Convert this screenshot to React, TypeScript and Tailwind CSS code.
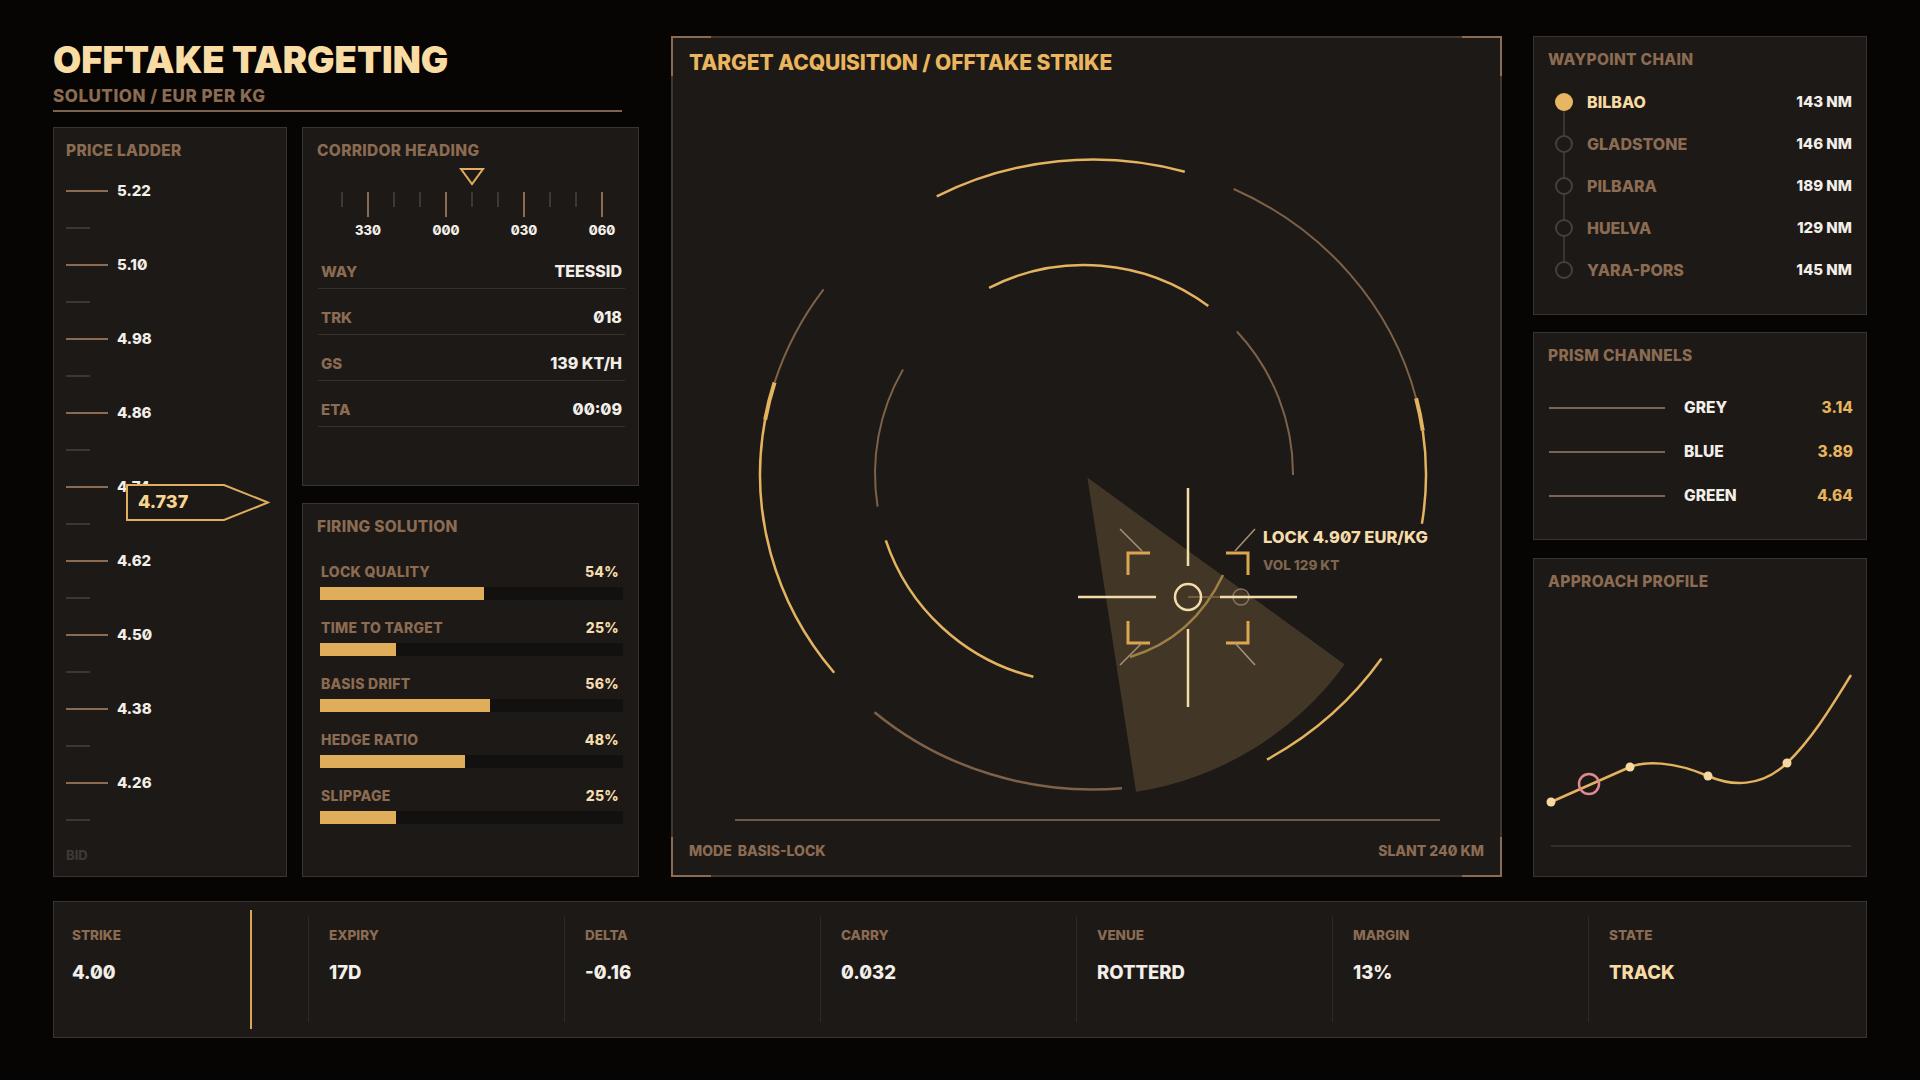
import React from 'react';

const ladder = ['5.22', '5.10', '4.98', '4.86', '4.74', '4.62', '4.50', '4.38', '4.26'];

const heading = [
  { k: 'WAY', v: 'TEESSID' },
  { k: 'TRK', v: '018' },
  { k: 'GS', v: '139 KT/H' },
  { k: 'ETA', v: '00:09' },
];

const firing = [
  { k: 'LOCK QUALITY', v: 54 },
  { k: 'TIME TO TARGET', v: 25 },
  { k: 'BASIS DRIFT', v: 56 },
  { k: 'HEDGE RATIO', v: 48 },
  { k: 'SLIPPAGE', v: 25 },
];

const waypoints = [
  { n: 'BILBAO', d: '143 NM' },
  { n: 'GLADSTONE', d: '146 NM' },
  { n: 'PILBARA', d: '189 NM' },
  { n: 'HUELVA', d: '129 NM' },
  { n: 'YARA-PORS', d: '145 NM' },
];

const prism = [
  { n: 'GREY', v: '3.14' },
  { n: 'BLUE', v: '3.89' },
  { n: 'GREEN', v: '4.64' },
];

const stats = [
  { k: 'STRIKE', v: '4.00' },
  { k: 'EXPIRY', v: '17D' },
  { k: 'DELTA', v: '-0.16' },
  { k: 'CARRY', v: '0.032' },
  { k: 'VENUE', v: 'ROTTERD' },
  { k: 'MARGIN', v: '13%' },
  { k: 'STATE', v: 'TRACK' },
];

// elliptical arc between two angles (degrees, clockwise from 3 o'clock)
const arc = (cx: number, cy: number, rx: number, ry: number, a0: number, a1: number) => {
  const rad = (a: number) => (a * Math.PI) / 180;
  const x0 = cx + rx * Math.cos(rad(a0));
  const y0 = cy + ry * Math.sin(rad(a0));
  const x1 = cx + rx * Math.cos(rad(a1));
  const y1 = cy + ry * Math.sin(rad(a1));
  const large = Math.abs(a1 - a0) > 180 ? 1 : 0;
  const sweep = a1 > a0 ? 1 : 0;
  return `M ${x0.toFixed(1)} ${y0.toFixed(1)} A ${rx} ${ry} 0 ${large} ${sweep} ${x1.toFixed(1)} ${y1.toFixed(1)}`;
};

const Label: React.FC<{ children: React.ReactNode }> = ({ children }) => (
  <div className="text-[15.5px] leading-none font-extrabold tracking-[0.02em] text-[#8b6b52]">{children}</div>
);

const Panel: React.FC<{ className?: string; children?: React.ReactNode }> = ({ className = '', children }) => (
  <div className={`bg-[#1d1916] border border-[#3a3330] ${className}`}>{children}</div>
);

const PriceLadder = () => (
  <Panel className="w-[234px] relative pl-[12px]">
    <div className="pt-[15px]">
      <Label>PRICE LADDER</Label>
    </div>
    <div className="mt-[14px]">
      {ladder.map((v) => (
        <React.Fragment key={v}>
          <div className="h-[37px] flex items-center">
            <div className="w-[42px] h-[2px] bg-[#8b6b52]" />
            <span className="ml-[9px] text-[15px] leading-none font-extrabold text-[#f2eee8]">{v}</span>
          </div>
          <div className="h-[37px] flex items-center">
            <div className="w-[24px] h-[2px] bg-[#3d3733]" />
          </div>
        </React.Fragment>
      ))}
    </div>
    <div className="mt-[11px] text-[13px] leading-none font-extrabold text-[#3e3834]">BID</div>

    {/* current price pointer */}
    <div className="absolute left-[72px] top-[356px] w-[144px] h-[37px] flex items-center">
      <svg className="absolute inset-0" width="144" height="37" viewBox="0 0 144 37">
        <polygon points="1,1 98,1 142,18.5 98,36 1,36" fill="#1d1916" stroke="#e0ae5c" strokeWidth="2" />
      </svg>
      <span className="relative ml-[12px] text-[18px] leading-none font-extrabold text-[#f7d58e]">4.737</span>
    </div>
  </Panel>
);

const CorridorHeading = () => {
  const ticks = Array.from({ length: 11 }, (_, i) => i);
  const labels = [
    { x: 65, t: '330' },
    { x: 143, t: '000' },
    { x: 221, t: '030' },
    { x: 299, t: '060' },
  ];
  return (
    <Panel className="h-[359px]">
      <div className="pt-[15px] pl-[14px]">
        <Label>CORRIDOR HEADING</Label>
      </div>
      <svg width="335" height="80" viewBox="0 0 335 80" className="block mt-[5px]">
        <polygon points="158,6 180,6 169,21" fill="none" stroke="#e0ae5c" strokeWidth="2" />
        {ticks.map((i) => {
          const major = i % 3 === 1;
          const x = 39 + i * 26;
          return (
            <line
              key={i}
              x1={x}
              x2={x}
              y1={29}
              y2={major ? 54 : 44}
              stroke={major ? '#8b6b52' : '#4a433e'}
              strokeWidth={major ? 2 : 1.5}
            />
          );
        })}
        {labels.map((l) => (
          <text
            key={l.t}
            x={l.x}
            y={72}
            textAnchor="middle"
            fontFamily="Inter, 'Liberation Sans', sans-serif"
            fontWeight={800}
            fontSize={13}
            fill="#f2eee8"
            style={{ fontFeatureSettings: "'zero'" }}
          >
            {l.t}
          </text>
        ))}
      </svg>
      <div className="ml-[15px] mr-[13px]">
        {heading.map((r) => (
          <div key={r.k} className="h-[46px] flex items-end justify-between pb-[9px] px-[3px] border-b border-[#36302c]">
            <span className="text-[15px] leading-none font-extrabold text-[#8b6b52]">{r.k}</span>
            <span className="text-[16px] leading-none font-extrabold text-[#f2eee8]">{r.v}</span>
          </div>
        ))}
      </div>
    </Panel>
  );
};

const FiringSolution = () => (
  <Panel className="flex-1 mt-[17px]">
    <div className="pt-[15px] pl-[14px]">
      <Label>FIRING SOLUTION</Label>
    </div>
    <div className="mt-[31px] pl-[17px] pr-[15px] flex flex-col gap-[21px]">
      {firing.map((f) => (
        <div key={f.k}>
          <div className="flex justify-between pl-[1px] pr-[4px] text-[14px] leading-none font-extrabold tracking-[0.02em]">
            <span className="text-[#8b6b52]">{f.k}</span>
            <span className="text-[#f5dcae]">{f.v}%</span>
          </div>
          <div className="mt-[8px] h-[13px] bg-[#131110]">
            <div className="h-full bg-[#e0ad5a]" style={{ width: `${f.v}%` }} />
          </div>
        </div>
      ))}
    </div>
  </Panel>
);

const Corner: React.FC<{ pos: string }> = ({ pos }) => (
  <div className={`absolute w-[40px] h-[40px] border-[#8b6b52] ${pos}`} />
);

const Radar = () => {
  const ocx = 422;
  const ocy = 438.5;
  const orx = 333;
  const ory = 315;
  const icx = 413;
  const icy = 438;
  const ir = 209;
  const gold = '#e3b35f';
  const brown = '#7d6148';
  const wx = 416.4;
  const wy = 441.6;
  const wr = 318;
  const w0 = (36 * Math.PI) / 180;
  const w1 = (81.2 * Math.PI) / 180;
  const wedge = `M ${wx} ${wy} L ${wx + wr * Math.cos(w0)} ${wy + wr * Math.sin(w0)} A ${wr} ${wr} 0 0 1 ${wx + wr * Math.cos(w1)} ${wy + wr * Math.sin(w1)} Z`;
  return (
    <svg className="absolute inset-[-2px]" width="831" height="841" viewBox="0 0 831 841" fill="none">
      <path d={wedge} fill="#c9a265" fillOpacity="0.22" />
      {/* outer ring */}
      <path d={arc(ocx, ocy, orx, ory, -118, -74)} stroke={gold} strokeWidth="2.5" />
      <path d={arc(ocx, ocy, orx, ory, -65, -14)} stroke={brown} strokeWidth="2" />
      <path d={arc(ocx, ocy, orx, ory, -14, -8)} stroke={gold} strokeWidth="4" />
      <path d={arc(ocx, ocy, orx, ory, -8, 9)} stroke={gold} strokeWidth="2.5" />
      <path d={arc(ocx, ocy, orx * 1.045, ory * 1.045, 34, 60)} stroke={gold} strokeWidth="2.5" />
      <path d={arc(ocx, ocy, orx, ory, 85, 131)} stroke={brown} strokeWidth="2.5" />
      <path d={arc(ocx, ocy, orx, ory, 141, 190)} stroke={gold} strokeWidth="2.5" />
      <path d={arc(ocx, ocy, orx, ory, 190, 197)} stroke={gold} strokeWidth="4" />
      <path d={arc(ocx, ocy, orx, ory, 197, 216)} stroke={brown} strokeWidth="2" />
      {/* inner ring */}
      <path d={arc(icx, icy, ir, ir, -117, -53.5)} stroke={gold} strokeWidth="2.5" />
      <path d={arc(icx, icy, ir, ir, -43, 0.3)} stroke={brown} strokeWidth="2" />
      <path d={arc(icx, icy, ir, ir, 171, 210)} stroke={brown} strokeWidth="2" />
      <path d={arc(icx, icy, ir, ir, 104, 161.5)} stroke={gold} strokeWidth="2.5" />

      {/* sweep trace */}
      <path d="M 459 621 Q 522 602 552 539" stroke="#a07f45" strokeWidth="2.5" />
      <line x1="517" y1="561" x2="576" y2="561" stroke="#8a6a40" strokeWidth="1.5" />
      <circle cx="570" cy="561" r="8" stroke="#8a7560" strokeWidth="1.5" />

      {/* crosshair */}
      <g stroke="#f2dcaa" strokeWidth="2.5">
        <line x1="407" y1="561" x2="485" y2="561" />
        <line x1="549" y1="561" x2="626" y2="561" />
        <line x1="517" y1="452" x2="517" y2="530" />
        <line x1="517" y1="593" x2="517" y2="671" />
        <circle cx="517" cy="561" r="13" />
      </g>
      <g stroke="#dca650" strokeWidth="3">
        <path d="M 479 517 L 457 517 L 457 539" />
        <path d="M 555 517 L 577 517 L 577 539" />
        <path d="M 457 585 L 457 607 L 479 607" />
        <path d="M 577 585 L 577 607 L 555 607" />
      </g>
      <g stroke="#a8927a" strokeWidth="1.5">
        <line x1="449" y1="493" x2="471" y2="515" />
        <line x1="584" y1="493" x2="564" y2="515" />
        <line x1="449" y1="629" x2="471" y2="607" />
        <line x1="584" y1="629" x2="564" y2="607" />
      </g>
      <text x="592" y="507" fontFamily="Inter, 'Liberation Sans', sans-serif" fontWeight={800} fontSize={16.5} fill="#f6dcaa" style={{ fontFeatureSettings: "'zero'" }}>
        LOCK 4.907 EUR/KG
      </text>
      <text x="592" y="534" fontFamily="Inter, 'Liberation Sans', sans-serif" fontWeight={800} fontSize={13.5} fill="#7f6550">
        VOL 129 KT
      </text>

      <line x1="64" y1="784" x2="769" y2="784" stroke="#6d5747" strokeWidth="2" />
    </svg>
  );
};

const TargetPanel = () => (
  <div className="ml-[32px] w-[831px] relative bg-[#1d1916] border-2 border-[#41372f] flex flex-col justify-between">
    <Radar />
    <Corner pos="-top-[2px] -left-[2px] border-t-2 border-l-2" />
    <Corner pos="-top-[2px] -right-[2px] border-t-2 border-r-2" />
    <Corner pos="-bottom-[2px] -left-[2px] border-b-2 border-l-2" />
    <Corner pos="-bottom-[2px] -right-[2px] border-b-2 border-r-2" />
    <div className="relative pt-[14px] pl-[16px] text-[21px] leading-none font-extrabold tracking-[-0.005em] text-[#e9b65f]">
      TARGET ACQUISITION / OFFTAKE STRIKE
    </div>
    <div className="relative flex justify-between pl-[16px] pr-[16px] pb-[17px] text-[14px] leading-none font-extrabold text-[#8b6b52]">
      <div className="flex gap-[6px]">
        <span>MODE</span>
        <span>BASIS-LOCK</span>
      </div>
      <span>SLANT 240 KM</span>
    </div>
  </div>
);

const WaypointChain = () => (
  <Panel className="h-[279px]">
    <div className="pt-[15px] pl-[14px]">
      <Label>WAYPOINT CHAIN</Label>
    </div>
    <div className="relative mt-[13px] pl-[21px] pr-[14px]">
      <div className="absolute left-[29px] top-[21px] bottom-[21px] w-[2px] bg-[#3a3430]" />
      {waypoints.map((w, i) => (
        <div key={w.n} className="relative h-[42px] flex items-center">
          {i === 0 ? (
            <div className="w-[18px] h-[18px] rounded-full bg-[#e6b663]" />
          ) : (
            <div className="w-[18px] h-[18px] rounded-full border-2 border-[#45403b] bg-[#1d1916]" />
          )}
          <span className={`ml-[14px] text-[16px] leading-none font-extrabold ${i === 0 ? 'text-[#f7dba4]' : 'text-[#8b6b52]'}`}>
            {w.n}
          </span>
          <span className="ml-auto text-[15px] leading-none font-extrabold text-[#f2eee8]">{w.d}</span>
        </div>
      ))}
    </div>
  </Panel>
);

const PrismChannels = () => (
  <Panel className="h-[208px] mt-[17px]">
    <div className="pt-[15px] pl-[14px]">
      <Label>PRISM CHANNELS</Label>
    </div>
    <div className="mt-[22px] pl-[15px] pr-[13px]">
      {prism.map((p) => (
        <div key={p.n} className="h-[44px] flex items-center">
          <div className="w-[116px] h-[2px] bg-[#7a6458]" />
          <span className="ml-[19px] text-[15.5px] leading-none font-extrabold text-[#f2eee8]">{p.n}</span>
          <span className="ml-auto text-[15.5px] leading-none font-extrabold text-[#e6b35e]">{p.v}</span>
        </div>
      ))}
    </div>
  </Panel>
);

const ApproachProfile = () => (
  <Panel className="flex-1 mt-[18px] relative">
    <svg className="absolute inset-[-1px]" width="334" height="319" viewBox="0 0 334 319" fill="none">
      <line x1="18" y1="288" x2="318" y2="288" stroke="#3e3732" strokeWidth="1.5" />
      <path
        d="M 18 244 L 97 209 C 112 203 140 203 175 218 C 198 228 228 230 254 205 C 280 180 300 146 318 117"
        stroke="#e3b35f"
        strokeWidth="2.5"
      />
      {[
        [18, 244],
        [97, 209],
        [175, 218],
        [254, 205],
      ].map(([x, y]) => (
        <circle key={x} cx={x} cy={y} r="4.5" fill="#f5d9a0" />
      ))}
      <circle cx="56" cy="226" r="10" stroke="#e08a90" strokeWidth="2.5" />
    </svg>
    <div className="relative pt-[15px] pl-[14px]">
      <Label>APPROACH PROFILE</Label>
    </div>
  </Panel>
);

const StatsBar = () => (
  <div className="mt-[24px] h-[137px] bg-[#1d1916] border border-[#3a3330] grid grid-cols-[254px_repeat(6,256px)]">
    {stats.map((s, i) => (
      <div key={s.k} className="flex">
        <div className={`flex-1 my-[15px] ${i === 0 ? 'pl-[18px]' : 'pl-[20px] border-l border-[#2f2a27]'}`}>
          <div className="pt-[12px] text-[13.5px] leading-none font-extrabold text-[#8b6b52]">{s.k}</div>
          <div className={`mt-[20px] text-[18.5px] leading-none font-extrabold ${s.k === 'STATE' ? 'text-[#f7dba4]' : 'text-[#f2eee8]'}`}>
            {s.v}
          </div>
        </div>
        {i === 0 && <div className="w-[2px] my-[8px] mr-[56px] bg-[#d9a54e]" />}
      </div>
    ))}
  </div>
);

export default function App() {
  return (
    <div className="w-[1920px] h-[1080px] overflow-hidden bg-[#060504] px-[53px] pt-[36px] font-['Inter','Liberation_Sans',sans-serif] [font-feature-settings:'zero']">
      <div className="flex h-[841px]">
        <div className="w-[586px] flex flex-col">
          <div className="pt-[6px] w-[569px] border-b-2 border-[#7a6450] pb-[5px]">
            <h1 className="text-[36.5px] leading-none font-black tracking-[0em] text-[#f8dca4]">OFFTAKE TARGETING</h1>
            <div className="mt-[9px] text-[17px] leading-none font-extrabold tracking-[0.03em] text-[#8b6b52]">SOLUTION / EUR PER KG</div>
          </div>
          <div className="mt-[15px] flex-1 flex gap-[15px]">
            <PriceLadder />
            <div className="flex-1 flex flex-col">
              <CorridorHeading />
              <FiringSolution />
            </div>
          </div>
        </div>
        <TargetPanel />
        <div className="ml-[31px] w-[334px] flex flex-col">
          <WaypointChain />
          <PrismChannels />
          <ApproachProfile />
        </div>
      </div>
      <StatsBar />
    </div>
  );
}
